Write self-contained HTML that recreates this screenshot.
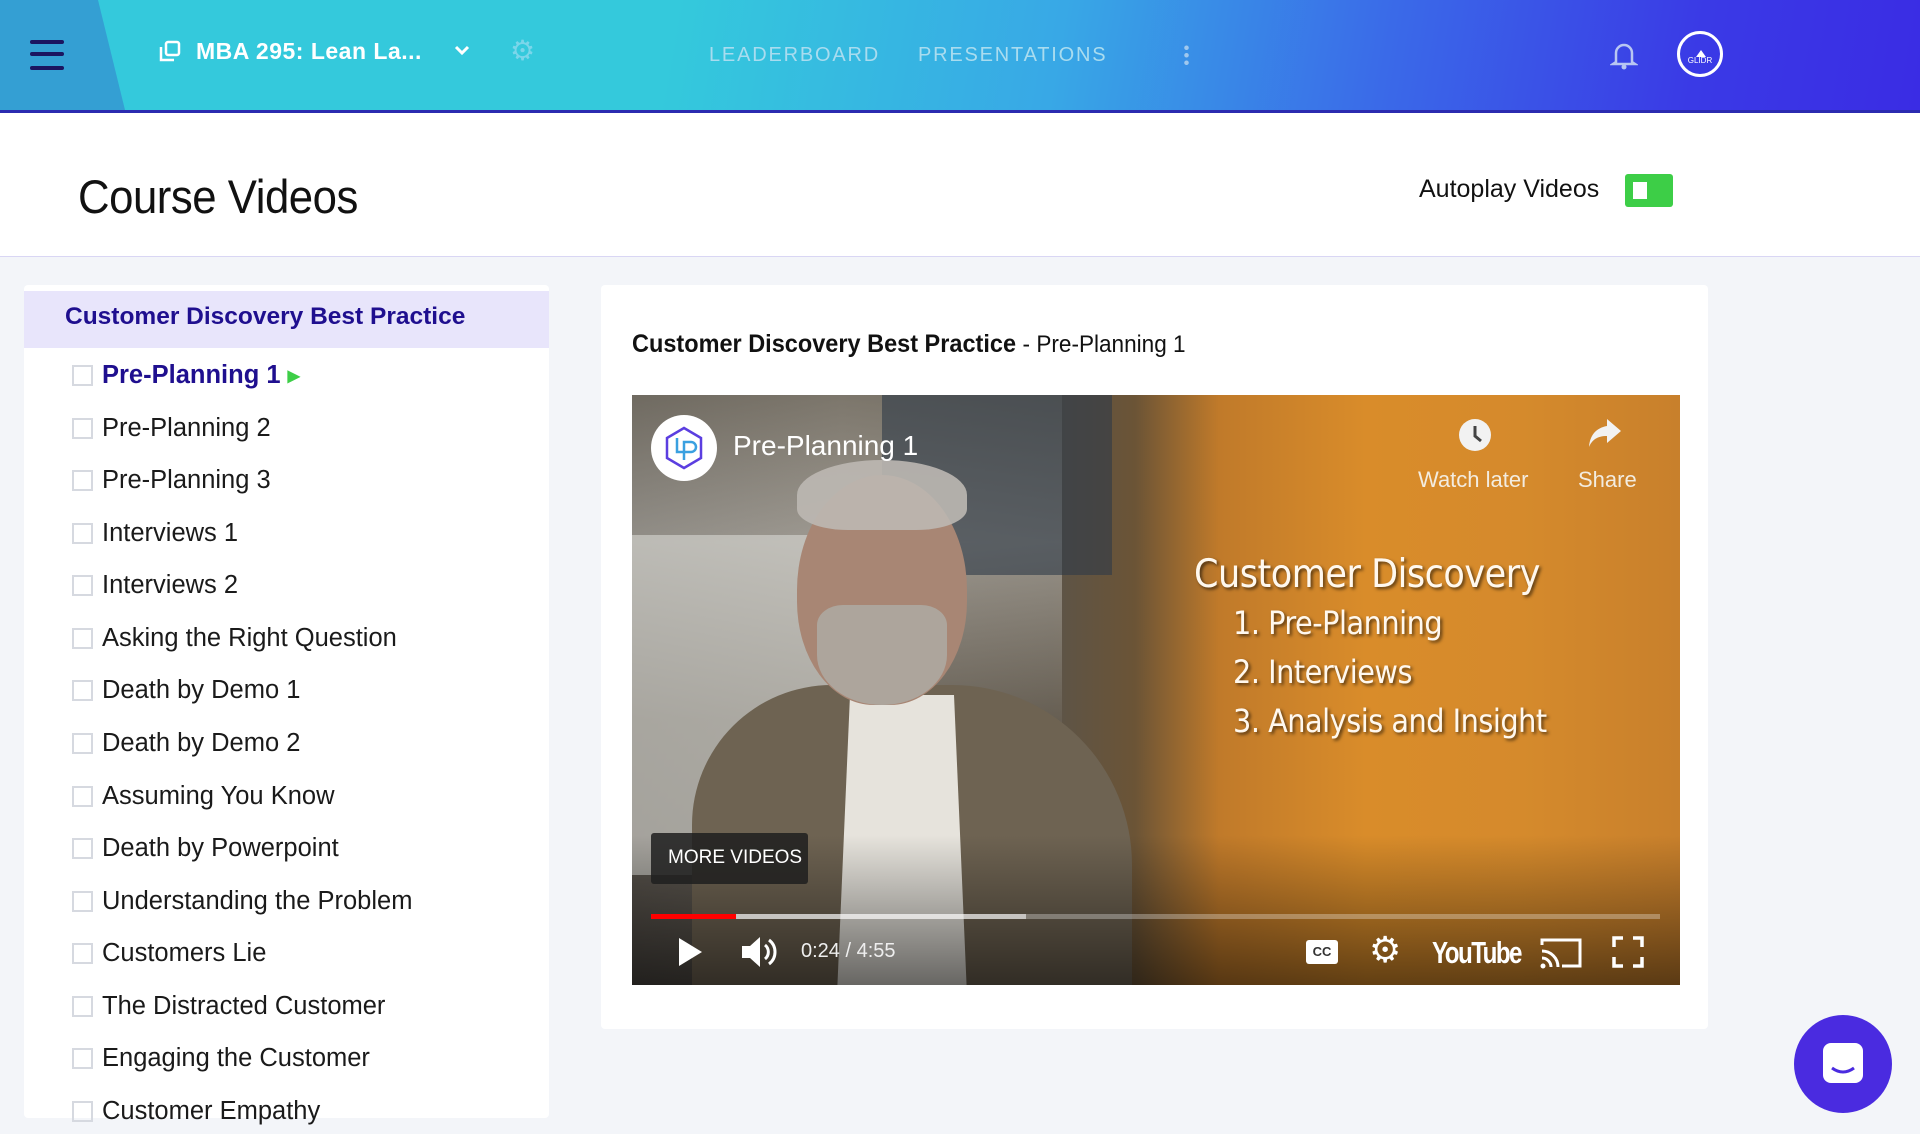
<!DOCTYPE html>
<html><head><meta charset="utf-8"><style>
*{margin:0;padding:0;box-sizing:border-box}
body{width:1920px;height:1134px;overflow:hidden;background:#f3f5f9;font-family:"Liberation Sans",sans-serif;position:relative}
.hdr{position:absolute;left:0;top:0;width:1920px;height:113px;background:linear-gradient(100deg,#34c9dc 0%,#34c9dc 35%,#38a8e6 55%,#3a6ae8 72%,#3a3ae6 88%,#3a2ce4 100%);border-bottom:3px solid #2b2bb0}
.abs{position:absolute}
.ham{left:30px;width:34px;height:4px;background:#1b1560;border-radius:2px}
.nav{top:44px;font-size:20px;letter-spacing:1.8px;color:#a9dcef}
.top{position:absolute;left:0;top:113px;width:1920px;height:144px;background:#fff;border-bottom:1px solid #d9d6f4}
.side{left:24px;top:285px;width:525px;height:833px;background:#fff;border-radius:4px}
.item{position:absolute;left:48px;font-size:25.5px;color:#1a1a1a;white-space:nowrap}
.item i{display:inline-block;width:21px;height:21px;border:2px solid #d6d9e0;vertical-align:-3px;margin-right:9px}
.card{left:601px;top:285px;width:1107px;height:744px;background:#fff;border-radius:4px}
.vid{left:632px;top:395px;width:1048px;height:590px;overflow:hidden;background:linear-gradient(90deg,#4e4a44 0%,#6b655c 20%,#5c5448 40%,#6b5436 48%,#c07a2a 56%,#d98c2a 70%,#d58a2c 85%,#c8802c 100%)}
.w{color:#fff;position:absolute;white-space:nowrap}
.slide{font-family:"DejaVu Sans Condensed","Liberation Sans Narrow",sans-serif;text-shadow:2px 2px 3px rgba(0,0,0,.6);color:#fff8ee;position:absolute;white-space:nowrap;letter-spacing:-.5px}
</style></head><body>
<div class="hdr">
 <div class="abs" style="left:0;top:0;width:126px;height:110px;background:#349fd3;clip-path:polygon(0 0,98px 0,125px 110px,0 110px)"></div>
 <div class="abs ham" style="top:40px"></div><div class="abs ham" style="top:52px"></div><div class="abs ham" style="top:66px"></div>
 <svg class="abs" style="left:158px;top:40px" width="24" height="24" viewBox="0 0 24 24" fill="none" stroke="#fff" stroke-width="2.5"><rect x="8" y="2" width="13" height="13" rx="2"/><path d="M3 7v13h13"/></svg>
 <div class="abs" style="left:196px;top:38px;font-size:23px;font-weight:bold;color:#fff;letter-spacing:.5px">MBA 295: Lean La...</div>
 <svg class="abs" style="left:453px;top:44px" width="18" height="14" viewBox="0 0 18 14"><path d="M3 3l6 6 6-6" stroke="#fff" stroke-width="3" fill="none"/></svg>
 <div class="abs" style="left:510px;top:34px;font-size:28px;color:#7ad6ea">⚙</div>
 <div class="abs nav" style="left:709px">LEADERBOARD</div>
 <div class="abs nav" style="left:918px">PRESENTATIONS</div>
 <div class="abs" style="left:1184px;top:44px;width:5px;height:22px;background:radial-gradient(circle,#a0c8ee 2px,transparent 2.5px) 0 0/5px 7.5px"></div>
 <svg class="abs" style="left:1610px;top:40px" width="28" height="30" viewBox="0 0 28 30"><path d="M6 22V13a8 8 0 0116 0v9l3 2H3z" fill="none" stroke="#b8c6f2" stroke-width="2.5"/><circle cx="14" cy="27" r="2.5" fill="#b8c6f2"/></svg>
 <div class="abs" style="left:1677px;top:31px;width:46px;height:46px;border:3px solid #fff;border-radius:50%;color:#fff;font-size:8px;text-align:center;padding-top:22px">GLIDR</div>
 <div class="abs" style="left:1696px;top:45px;border:5px solid transparent;border-bottom:7px solid #fff;width:0;height:0"></div>
</div>
<div class="top">
 <div class="abs" style="left:78px;top:56px;font-size:47px;color:#111;letter-spacing:-.5px;transform:scaleX(.93);transform-origin:left">Course Videos</div>
 <div class="abs" style="left:1419px;top:62px;font-size:25px;color:#111">Autoplay Videos</div>
 <div class="abs" style="left:1625px;top:61px;width:48px;height:33px;background:#3dce47;border-radius:3px"><div class="abs" style="left:8px;top:8px;width:14px;height:17px;background:#fff"></div></div>
</div>
<div class="abs side">
 <div class="abs" style="left:0;top:6px;width:525px;height:57px;background:#e8e5fb"></div>
 <div class="abs" style="left:41px;top:18px;font-size:24.5px;font-weight:bold;color:#1f0f8f">Customer Discovery Best Practice</div>
 <div class="item" style="top:76px;color:#1f0f8f;font-weight:bold"><i></i>Pre-Planning 1 <span style="color:#3dce47;font-size:16px;vertical-align:2px">▶</span></div>
 <div class="item" style="top:129px"><i></i>Pre-Planning 2</div>
 <div class="item" style="top:181px"><i></i>Pre-Planning 3</div>
 <div class="item" style="top:234px"><i></i>Interviews 1</div>
 <div class="item" style="top:286px"><i></i>Interviews 2</div>
 <div class="item" style="top:339px"><i></i>Asking the Right Question</div>
 <div class="item" style="top:391px"><i></i>Death by Demo 1</div>
 <div class="item" style="top:444px"><i></i>Death by Demo 2</div>
 <div class="item" style="top:497px"><i></i>Assuming You Know</div>
 <div class="item" style="top:549px"><i></i>Death by Powerpoint</div>
 <div class="item" style="top:602px"><i></i>Understanding the Problem</div>
 <div class="item" style="top:654px"><i></i>Customers Lie</div>
 <div class="item" style="top:707px"><i></i>The Distracted Customer</div>
 <div class="item" style="top:759px"><i></i>Engaging the Customer</div>
 <div class="item" style="top:812px"><i></i>Customer Empathy</div>
</div>
<div class="abs card">
 <div class="abs" style="left:31px;top:45px;font-size:25px;color:#111;white-space:nowrap;transform:scaleX(.94);transform-origin:left"><span style="font-weight:bold">Customer Discovery Best Practice</span> <span style="font-size:24px">- Pre-Planning 1</span></div>
</div>
<div class="abs vid">
 <div class="abs" style="left:0;top:0;width:430px;height:590px;background:linear-gradient(180deg,#8a8478 0%,#c9c6bf 25%,#6e675c 55%,#4a4540 100%);opacity:.55"></div>
 <div class="abs" style="left:250px;top:0;width:230px;height:180px;background:#2e3a48;opacity:.6"></div>
 <div class="abs" style="left:0;top:140px;width:240px;height:340px;background:#d8d8d4;opacity:.6"></div>
 <div class="abs" style="left:60px;top:290px;width:440px;height:320px;background:#6e6352;border-radius:140px 180px 0 0"></div>
 <div class="abs" style="left:205px;top:300px;width:130px;height:300px;background:#e6e3dc;clip-path:polygon(10% 0,90% 0,100% 100%,0 100%)"></div>
 <div class="abs" style="left:165px;top:80px;width:170px;height:230px;background:#a88674;border-radius:50% 50% 45% 45%"></div>
 <div class="abs" style="left:165px;top:65px;width:170px;height:70px;background:#bdb8b2;border-radius:50% 50% 30% 30%;opacity:.9"></div>
 <div class="abs" style="left:185px;top:210px;width:130px;height:100px;background:#ada59c;border-radius:20% 20% 50% 50%"></div>
 <div class="abs" style="left:19px;top:20px;width:66px;height:66px;border-radius:50%;background:#fff"></div>
 <svg class="abs" style="left:28px;top:29px" width="48" height="48" viewBox="0 0 48 48"><path d="M24 4l17 10v20L24 44 7 34V14z" fill="none" stroke="#5b3ee0" stroke-width="2.5"/><path d="M17 14v14h14a5 5 0 000-10h-7v18" fill="none" stroke="#3aa0e0" stroke-width="2.5"/></svg>
 <div class="w" style="left:101px;top:35px;font-size:28px">Pre-Planning 1</div>
 <svg class="abs" style="left:826px;top:23px" width="34" height="34" viewBox="0 0 34 34"><circle cx="17" cy="17" r="16" fill="#f2f2f2"/><path d="M17 8v10l6 5" stroke="#444" stroke-width="3" fill="none"/></svg>
 <div class="w" style="left:786px;top:72px;font-size:22px;color:#f3ece0">Watch later</div>
 <svg class="abs" style="left:955px;top:22px" width="36" height="32" viewBox="0 0 36 32"><path d="M20 2l14 12-14 12v-7C10 19 5 23 2 30 3 18 9 11 20 9z" fill="#f2f2f2"/></svg>
 <div class="w" style="left:946px;top:72px;font-size:22px;color:#f3ece0">Share</div>
 <div class="slide" style="left:562px;top:157px;font-size:39px">Customer Discovery</div>
 <div class="slide" style="left:601px;top:209px;font-size:32px">1. Pre-Planning</div>
 <div class="slide" style="left:601px;top:258px;font-size:32px">2. Interviews</div>
 <div class="slide" style="left:601px;top:307px;font-size:32px">3. Analysis and Insight</div>
 <div class="abs" style="left:0;top:440px;width:1048px;height:150px;background:linear-gradient(180deg,transparent,rgba(0,0,0,.55))"></div>
 <div class="abs" style="left:19px;top:438px;width:157px;height:51px;background:rgba(30,30,30,.85);border-radius:3px"></div>
 <div class="w" style="left:36px;top:452px;font-size:19px">MORE VIDEOS</div>
 <div class="abs" style="left:19px;top:519px;width:1009px;height:5px;background:rgba(255,255,255,.3)"></div>
 <div class="abs" style="left:19px;top:519px;width:375px;height:5px;background:rgba(255,255,255,.55)"></div>
 <div class="abs" style="left:19px;top:519px;width:85px;height:5px;background:#f00"></div>
 <svg class="abs" style="left:45px;top:542px" width="26" height="30" viewBox="0 0 26 30"><path d="M2 1l23 14L2 29z" fill="#fff"/></svg>
 <svg class="abs" style="left:108px;top:540px" width="38" height="34" viewBox="0 0 38 34"><path d="M2 11h8l10-9v30l-10-9H2z" fill="#fff"/><path d="M25 10a9 9 0 010 14M29 5a15 15 0 010 24" stroke="#fff" stroke-width="3" fill="none"/></svg>
 <div class="w" style="left:169px;top:545px;font-size:20px;color:#eee">0:24 / 4:55</div>
 <div class="abs" style="left:674px;top:545px;width:32px;height:24px;background:#fff;border-radius:3px;font-size:13px;font-weight:bold;color:#333;text-align:center;line-height:24px">CC</div>
 <div class="w" style="left:737px;top:534px;font-size:36px">⚙</div>
 <div class="w" style="left:800px;top:540px;font-size:31px;font-weight:bold;letter-spacing:-2px;transform:scaleX(.78);transform-origin:left">YouTube</div>
 <svg class="abs" style="left:908px;top:542px" width="42" height="32" viewBox="0 0 42 32"><path d="M2 8V3h38v26H22" stroke="#fff" stroke-width="3" fill="none"/><path d="M2 14a16 16 0 0116 16M2 21a9 9 0 019 9" stroke="#fff" stroke-width="3" fill="none"/><circle cx="3" cy="29" r="2.5" fill="#fff"/></svg>
 <svg class="abs" style="left:980px;top:541px" width="32" height="32" viewBox="0 0 32 32"><path d="M2 11V2h9M21 2h9v9M30 21v9h-9M11 30H2v-9" stroke="#fff" stroke-width="3.5" fill="none"/></svg>
</div>
<div class="abs" style="left:1794px;top:1015px;width:98px;height:98px;border-radius:50%;background:#4a2be0"></div>
<svg class="abs" style="left:1820px;top:1040px" width="46" height="48" viewBox="0 0 46 48"><rect x="3" y="3" width="40" height="40" rx="8" fill="#fff"/><path d="M12 28q11 8 22 0" stroke="#4a2be0" stroke-width="3" fill="none"/></svg>
</body></html>
